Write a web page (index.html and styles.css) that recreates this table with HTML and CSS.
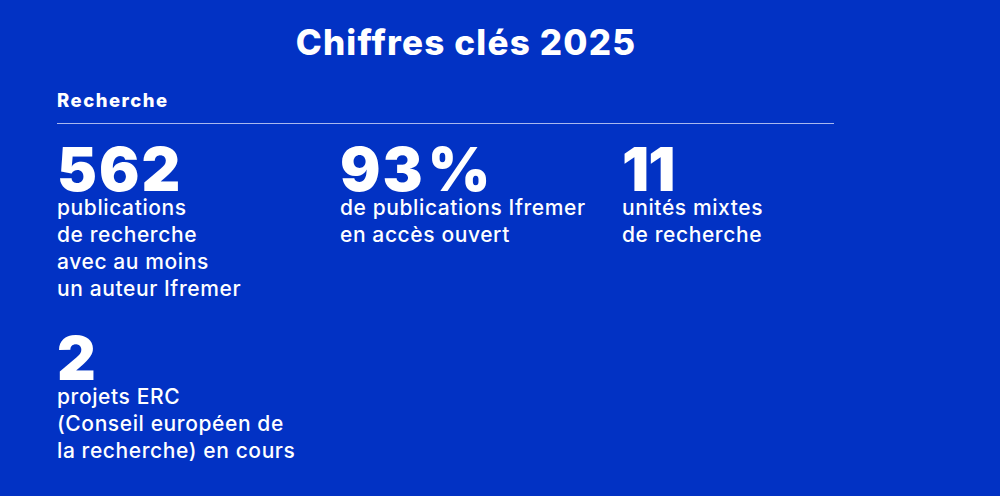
FILE: index.html
```html
<!DOCTYPE html>
<html lang="fr">
<head>
<meta charset="utf-8">
<title>Chiffres clés 2025</title>
<link rel="stylesheet" href="styles.css">
</head>
<body>
<main class="page">
  <h1 class="title">Chiffres clés 2025</h1>
  <section class="section">
    <h2 class="section-label">Recherche</h2>
    <div class="stats">
      <div class="stat">
        <div class="num">562</div>
        <p class="desc">publications<br>de recherche<br>avec au moins<br>un auteur Ifremer</p>
      </div>
      <div class="stat">
        <div class="num">93<span class="pct">%</span></div>
        <p class="desc">de publications Ifremer<br>en accès ouvert</p>
      </div>
      <div class="stat">
        <div class="num num-narrow">11</div>
        <p class="desc">unités mixtes<br>de recherche</p>
      </div>
      <div class="stat">
        <div class="num">2</div>
        <p class="desc">projets ERC<br>(Conseil européen de<br>la recherche) en cours</p>
      </div>
    </div>
  </section>
</main>
</body>
</html>
```

FILE: styles.css
```css
html, body {
  margin: 0;
  padding: 0;
}
body {
  background: #0232c4;
  color: #ffffff;
  font-family: Inter, "Noto Sans", "DejaVu Sans", sans-serif;
  width: 1000px;
  height: 496px;
  overflow: hidden;
}
.page {
  padding: 21px 0 0 57px;
  width: 818px;
}
.title {
  margin: 0;
  font-size: 35px;
  line-height: 42px;
  font-weight: 800;
  text-align: center;
  letter-spacing: 1.2px;
}
.section {
  width: 777px;
  margin-top: 26px;
}
.section-label {
  margin: 0;
  font-size: 18.5px;
  line-height: 22px;
  font-weight: 800;
  letter-spacing: 1.5px;
  padding-bottom: 12px;
  border-bottom: 1.5px solid #a9b8ee;
}
.stats {
  display: grid;
  grid-template-columns: 283px 282px 1fr;
  row-gap: 31px;
  margin-top: 20px;
}
.num {
  font-size: 60px;
  line-height: 50px;
  font-weight: 900;
  letter-spacing: 2px;
}
.num-narrow {
  letter-spacing: -1px;
}
.pct {
  margin-left: 3px;
}
.desc {
  margin: 0;
  font-size: 21px;
  line-height: 27px;
  font-weight: 500;
  letter-spacing: 0.6px;
}
```
